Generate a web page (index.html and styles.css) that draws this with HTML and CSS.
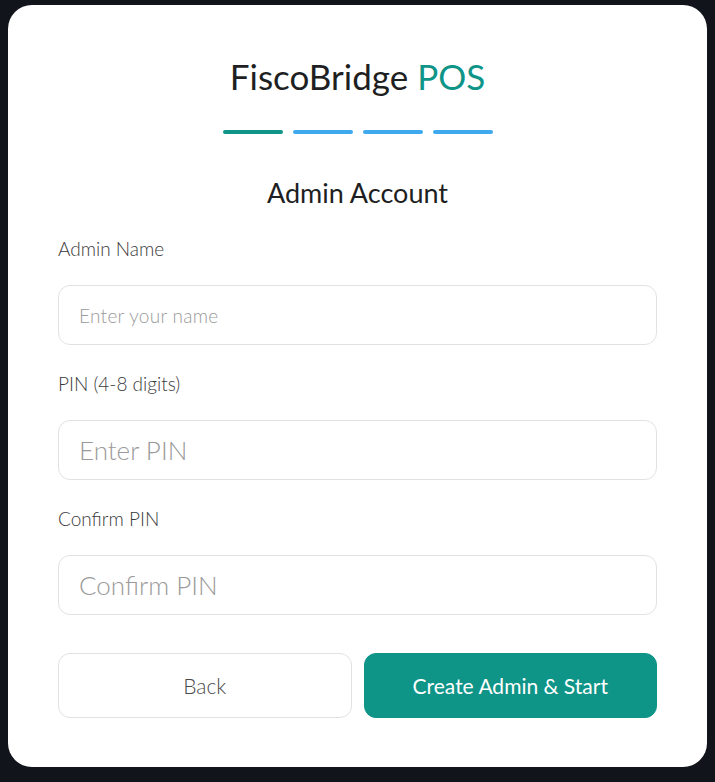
FILE: index.html
```html
<!DOCTYPE html>
<html lang="en">
<head>
    <meta charset="UTF-8">
    <meta name="viewport" content="width=device-width, initial-scale=1.0">
    <title>FiscoBridge POS - Setup</title>
    <link rel="stylesheet" href="styles.css">
</head>
<body>
    <div class="setup-card">
        <h1 class="brand">FiscoBridge <span class="brand-accent">POS</span></h1>

        <div class="steps">
            <span class="step active"></span>
            <span class="step"></span>
            <span class="step"></span>
            <span class="step"></span>
        </div>

        <h2>Admin Account</h2>

        <div class="input-group">
            <label for="admin-name">Admin Name</label>
            <input type="text" id="admin-name" placeholder="Enter your name">
        </div>
        <div class="input-group">
            <label for="pin">PIN (4-8 digits)</label>
            <input type="password" id="pin" class="pin-input" placeholder="Enter PIN">
        </div>
        <div class="input-group">
            <label for="pin-confirm">Confirm PIN</label>
            <input type="password" id="pin-confirm" class="pin-input" placeholder="Confirm PIN">
        </div>

        <div class="actions">
            <button class="btn btn-secondary">Back</button>
            <button class="btn btn-primary">Create Admin &amp; Start</button>
        </div>
    </div>
</body>
</html>
```

FILE: styles.css
```css
body {
    font-family: 'Lato', 'Noto Sans', sans-serif;
    background-color: #11151b;
    margin: 0;
    padding: 5px 8px;
}

.setup-card {
    background-color: #ffffff;
    border-radius: 24px;
    padding: 51px 50px 49px;
}

.brand {
    margin: 0;
    font-size: 35px;
    line-height: 40px;
    font-weight: 400;
    text-align: center;
    color: #1e1f22;
}

.brand-accent {
    color: #0f9488;
}

.steps {
    display: flex;
    justify-content: center;
    gap: 10px;
    margin-top: 34px;
}

.step {
    width: 60px;
    height: 4px;
    border-radius: 2px;
    background-color: #3fa9f0;
}

.step.active {
    background-color: #0f9488;
}

h2 {
    margin: 43px 0 28px;
    font-size: 27px;
    line-height: 32px;
    font-weight: 400;
    text-align: center;
    color: #1e1f22;
}

.input-group {
    margin-bottom: 27px;
}

label {
    display: block;
    margin-bottom: 24px;
    font-size: 19px;
    line-height: 24px;
    font-weight: 300;
    color: #3a3a3a;
}

input {
    display: block;
    width: 100%;
    height: 60px;
    box-sizing: border-box;
    padding: 0 20px;
    font-family: inherit;
    font-size: 19px;
    font-weight: 300;
    letter-spacing: 0.3px;
    color: #333333;
    border: 1px solid #e2e2e2;
    border-radius: 12px;
    outline: none;
}

input::placeholder {
    color: #9a9a9a;
}

.pin-input {
    font-size: 26px;
    letter-spacing: 0;
}

.actions {
    display: flex;
    gap: 12px;
    margin-top: 38px;
}

.btn {
    flex: 1;
    height: 65px;
    font-family: inherit;
    font-size: 21px;
    font-weight: 300;
    border-radius: 12px;
    cursor: pointer;
}

.btn-secondary {
    background-color: #ffffff;
    border: 1px solid #e2e2e2;
    color: #4a4a4a;
}

.btn-primary {
    background-color: #0f9488;
    border: 1px solid #0f9488;
    color: #ffffff;
    font-weight: 400;
}
```
